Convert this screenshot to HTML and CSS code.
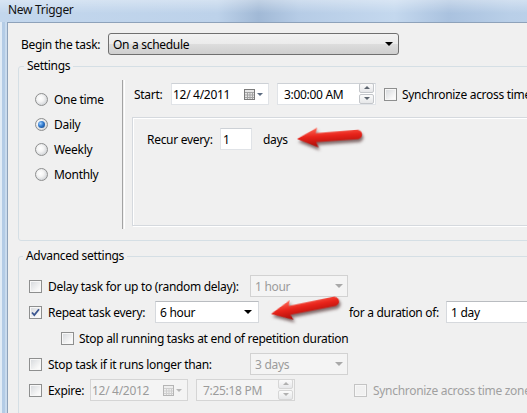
FILE: index.html
```html
<!DOCTYPE html>
<html>
<head>
    <meta charset="UTF-8">
    <title>New Trigger</title>
    <link rel="stylesheet" href="styles.css">
</head>
<body>
    <div class="window">
        <div class="titlebar">New Trigger</div>
        <div class="client">
            <div class="row begin-row">
                <span class="lbl lbl-begin">Begin the task:</span>
                <div class="combo combo-main"><span>On a schedule</span><i class="caret"></i></div>
            </div>

            <fieldset class="group group-settings">
                <legend>Settings</legend>
                <div class="settings-body">
                    <div class="radios">
                        <div class="radio-row"><span class="radio"></span>One time</div>
                        <div class="radio-row"><span class="radio on"></span>Daily</div>
                        <div class="radio-row"><span class="radio"></span>Weekly</div>
                        <div class="radio-row"><span class="radio"></span>Monthly</div>
                    </div>
                    <div class="vsep"></div>
                    <div class="sched">
                        <div class="row start-row">
                            <span class="lbl lbl-start">Start:</span>
                            <div class="field date">
                                <span class="val">12/&nbsp;4/2011</span>
                                <span class="cal">
                                    <svg width="11" height="11" viewBox="0 0 11 11"><rect x="0.5" y="0.5" width="10" height="10" fill="#e6e6e6" stroke="#7b7b7b"/><path d="M1 3.5h9M1 6h9M1 8.5h9M3.5 3v7M6 3v7M8.5 3v7" stroke="#a3a3a3" stroke-width="1"/></svg>
                                    <i class="caret caret-small"></i>
                                </span>
                            </div>
                            <div class="field time">
                                <span class="val">3:00:00 AM</span>
                                <span class="spin"><span class="spin-btn up"></span><span class="spin-btn down"></span></span>
                            </div>
                            <span class="chk sync-chk"></span>
                            <span class="sync-txt">Synchronize across time zones</span>
                        </div>
                        <div class="recur-box">
                            <div class="row">
                                <span class="lbl lbl-recur">Recur every:</span>
                                <div class="field num">1</div>
                                <span class="days">days</span>
                            </div>
                        </div>
                    </div>
                </div>
            </fieldset>

            <fieldset class="group group-adv">
                <legend>Advanced settings</legend>
                <div class="adv-body">
                    <div class="adv-row">
                        <span class="chk"></span>
                        <span class="lbl w-delay">Delay task for up to (random delay):</span>
                        <div class="combo combo-off w-98"><span>1 hour</span><i class="caret"></i></div>
                    </div>
                    <div class="adv-row">
                        <span class="chk checked">
                            <svg width="9" height="9" viewBox="0 0 9 9"><path d="M1 4.5l2.3 2.6L8 1.2" fill="none" stroke="#3b5690" stroke-width="1.8"/></svg>
                        </span>
                        <span class="lbl w-repeat">Repeat task every:</span>
                        <div class="combo combo-white w-104"><span>6 hour</span><i class="caret"></i></div>
                        <span class="lbl w-duration">for a duration of:</span>
                        <div class="combo combo-white w-130"><span>1 day</span><i class="caret"></i></div>
                    </div>
                    <div class="adv-row indent">
                        <span class="chk"></span>
                        <span class="lbl lbl-tight">Stop all running tasks at end of repetition duration</span>
                    </div>
                    <div class="adv-row">
                        <span class="chk"></span>
                        <span class="lbl w-delay">Stop task if it runs longer than:</span>
                        <div class="combo combo-off w-98"><span>3 days</span><i class="caret"></i></div>
                    </div>
                    <div class="adv-row">
                        <span class="chk"></span>
                        <span class="lbl w-expire">Expire:</span>
                        <div class="field date field-off">
                            <span class="val">12/&nbsp;4/2012</span>
                            <span class="cal">
                                <svg width="11" height="11" viewBox="0 0 11 11"><rect x="0.5" y="0.5" width="10" height="10" fill="#eeeeee" stroke="#b5b5b5"/><path d="M1 3.5h9M1 6h9M1 8.5h9M3.5 3v7M6 3v7M8.5 3v7" stroke="#cfcfcf" stroke-width="1"/></svg>
                                <i class="caret caret-small"></i>
                            </span>
                        </div>
                        <div class="field time field-off">
                            <span class="val">7:25:18 PM</span>
                            <span class="spin"><span class="spin-btn up"></span><span class="spin-btn down"></span></span>
                        </div>
                        <span class="chk chk-off sync2-chk"></span>
                        <span class="sync2-txt">Synchronize across time zones</span>
                    </div>
                </div>
            </fieldset>
        </div>

        <!-- red annotation arrows -->
        <svg class="marks" width="527" height="413" viewBox="0 0 527 413">
            <defs>
                <linearGradient id="red" x1="0" y1="0" x2="0" y2="1">
                    <stop offset="0" stop-color="#ff6a58"/>
                    <stop offset="0.45" stop-color="#e8231a"/>
                    <stop offset="1" stop-color="#a80d08"/>
                </linearGradient>
            </defs>
            <g transform="translate(297 139) rotate(-4)">
                <path class="arrow" d="M0 0 L21 -10 L19 -4.5 L60 -5 C67 -5 67 4.5 60 4.5 L19 4.5 L21 10 Z"/>
            </g>
            <g transform="translate(271 314) rotate(-11)">
                <path class="arrow" d="M0 0 L21 -10 L19 -4.5 L64 -5 C71 -5 71 4.5 64 4.5 L19 4.5 L21 10 Z"/>
            </g>
        </svg>
    </div>
</body>
</html>
```

FILE: styles.css
```css
html, body {
    margin: 0;
    padding: 0;
}
body {
    width: 527px;
    height: 413px;
    overflow: hidden;
    font-family: "Noto Sans", "Open Sans", sans-serif;
    font-size: 12px;
    letter-spacing: -0.3px;
    color: #000;
    background: linear-gradient(90deg, #e2ecf6 0, #e2ecf6 2px, #b4cce6 2px, #b4cce6 5px, #c9dbee 5px);
}
.window {
    position: relative;
    width: 680px;
    height: 413px;
}
.titlebar {
    height: 22px;
    padding-left: 8px;
    line-height: 20px;
    color: #111;
    background:
        linear-gradient(rgba(255,255,255,0.35), rgba(255,255,255,0) 60%),
        linear-gradient(90deg, #c3d7ed 0, #bdd2ea 32%, #a1b9d6 38%, #b6cce6 44%, #c4d8ee 58%, #aac2df 66%, #b9cfe8 75%, #c6daef 100%);
}
.client {
    margin-left: 7px;
    height: 391px;
    box-sizing: border-box;
    border-top: 1px solid #8ea2ba;
    border-left: 1px solid #8ea2ba;
    background: #f0f0f0;
    padding-left: 10px;
}
.row {
    display: flex;
    align-items: center;
}
.lbl {
    display: inline-block;
    white-space: nowrap;
}

/* begin the task */
.begin-row {
    padding-top: 10px;
    padding-left: 3px;
}
.lbl-begin {
    width: 87px;
}
.combo {
    display: flex;
    align-items: center;
    height: 22px;
    box-sizing: border-box;
    padding-left: 4px;
    white-space: nowrap;
    flex: none;
}
.combo-main {
    width: 291px;
    border: 1px solid #707070;
    border-radius: 3px;
    background: linear-gradient(#f3f3f3 0, #ebebeb 50%, #dddddd 50%, #cfcfcf 100%);
}
.caret {
    display: block;
    width: 0;
    height: 0;
    margin-left: auto;
    margin-right: 5px;
    border-left: 4px solid transparent;
    border-right: 4px solid transparent;
    border-top: 4px solid #000;
}
.caret-small {
    margin: 0 0 0 2px;
    border-left-width: 3px;
    border-right-width: 3px;
    border-top: 3px solid #5b6b80;
}
.combo-white {
    border: 1px solid #d6d9dd;
    border-top-color: #b9bcc0;
    background: #fff;
}
.combo-white .caret {
    margin-right: 6px;
}
.combo-off {
    border: 1px solid #d2d2d2;
    background: #f4f4f4;
    color: #9b9b9b;
}
.combo-off .caret {
    border-top-color: #a9a9a9;
    margin-right: 4px;
}

/* group boxes */
.group {
    margin: 0;
    padding: 0;
    width: 640px;
    box-sizing: border-box;
    border: 1px solid #d5dfe5;
    border-radius: 3px;
}
.group legend {
    padding: 0 3px;
    line-height: 16px;
}
.group-settings {
    margin-top: 3px;
    padding-bottom: 11px;
}
.group-settings legend {
    margin-left: 5px;
}
.group-adv {
    margin-top: 7px;
    height: 200px;
}
.group-adv legend {
    margin-left: 4px;
}

/* settings */
.settings-body {
    display: flex;
    padding-top: 6px;
    height: 149px;
    box-sizing: content-box;
}
.radios {
    width: 103px;
    padding-top: 7px;
    padding-left: 16px;
    box-sizing: border-box;
}
.radio-row {
    display: flex;
    align-items: center;
    height: 25px;
}
.radio {
    position: relative;
    width: 13px;
    height: 13px;
    box-sizing: border-box;
    margin-right: 6px;
    border: 1px solid #8e8f8f;
    border-radius: 50%;
    background: radial-gradient(circle at 40% 40%, #ffffff 0, #f4f4f4 35%, #cfd2d6 80%);
}
.radio.on::after {
    content: "";
    position: absolute;
    left: 2px;
    top: 2px;
    width: 7px;
    height: 7px;
    border-radius: 50%;
    background: radial-gradient(circle at 35% 35%, #9fd0ff 0, #2f78cc 45%, #123f7c 100%);
}
.vsep {
    width: 1px;
    border-left: 1px solid #a3a3a3;
    border-right: 1px solid #ffffff;
}
.sched {
    padding-left: 7px;
    flex: 1;
}
.start-row {
    margin-top: 3px;
    margin-left: 2px;
}
.lbl-start {
    width: 37px;
}
.field {
    display: flex;
    align-items: center;
    height: 22px;
    box-sizing: border-box;
    border: 1px solid #e0e3e7;
    border-top-color: #cdd1d6;
    background: #fff;
    white-space: nowrap;
    flex: none;
}
.field.date {
    width: 98px;
    padding-left: 1px;
}
.field.time {
    width: 99px;
    margin-left: 8px;
    padding-left: 6px;
}
.cal {
    display: flex;
    align-items: center;
    margin-left: auto;
    margin-right: 5px;
}
.spin {
    display: flex;
    flex-direction: column;
    margin-left: auto;
    margin-right: 1px;
    width: 15px;
}
.spin-btn {
    position: relative;
    height: 8px;
    border: 1px solid #c3c6ca;
    border-radius: 2px;
    background: linear-gradient(#fbfbfb, #e6e7e9);
    margin: 0 0 1px;
}
.spin-btn::after {
    content: "";
    position: absolute;
    left: 4px;
    top: 2px;
    border-left: 3px solid transparent;
    border-right: 3px solid transparent;
}
.spin-btn.up::after {
    border-bottom: 3px solid #5e6670;
}
.spin-btn.down::after {
    border-top: 3px solid #5e6670;
}
.field-off {
    background: #f4f4f4;
    border-color: #d5d5d5;
    color: #9b9b9b;
}
.field-off .caret-small {
    border-top-color: #b7b7b7;
}
.field-off .spin-btn {
    border-color: #d6d6d6;
}
.field-off .spin-btn.up::after {
    border-bottom-color: #b0b0b0;
}
.field-off .spin-btn.down::after {
    border-top-color: #b0b0b0;
}

.chk {
    display: flex;
    align-items: center;
    justify-content: center;
    width: 13px;
    height: 13px;
    box-sizing: border-box;
    border: 1px solid #8e8f8f;
    background: linear-gradient(135deg, #d4d7db 0, #f6f6f6 70%, #ffffff 100%);
    box-shadow: inset 0 0 0 1px #f7f7f7;
    flex: none;
}
.chk-off {
    border-color: #c4c4c4;
    background: #f1f1f1;
}
.sync-chk {
    margin-left: 8px;
}
.sync-txt {
    margin-left: 5px;
    white-space: nowrap;
}

.recur-box {
    margin-top: 12px;
    height: 109px;
    box-sizing: border-box;
    border: 1px solid #d5d9de;
    box-shadow: inset 1px 1px 0 #ffffff, 1px 1px 0 #ffffff;
    padding-top: 10px;
    padding-left: 14px;
}
.lbl-recur {
    width: 73px;
}
.field.num {
    width: 32px;
    padding-left: 2px;
}
.days {
    margin-left: 11px;
}

/* advanced settings */
.adv-body {
    padding-top: 11px;
    padding-left: 10px;
}
.adv-row {
    display: flex;
    align-items: center;
    height: 22px;
    margin-bottom: 4px;
}
.adv-row > .chk + .lbl {
    margin-left: 6px;
}
.adv-row.indent {
    padding-left: 32px;
}
.adv-row > .chk + .lbl-tight {
    margin-left: 5px;
}
.w-delay { width: 202px; }
.w-repeat { width: 107px; }
.w-duration { width: 97px; margin-left: 90px; }
.w-expire { width: 42px; }
.w-98 { width: 98px; }
.w-104 { width: 104px; }
.w-130 { width: 130px; }
.sync2-chk {
    margin-left: 59px;
}
.sync2-txt {
    margin-left: 6px;
    color: #a0a0a0;
    white-space: nowrap;
}

.marks {
    position: absolute;
    left: 0;
    top: 0;
    pointer-events: none;
}
.arrow {
    fill: url(#red);
    filter: drop-shadow(1px 3px 1.5px rgba(40, 0, 0, 0.55));
}
```
